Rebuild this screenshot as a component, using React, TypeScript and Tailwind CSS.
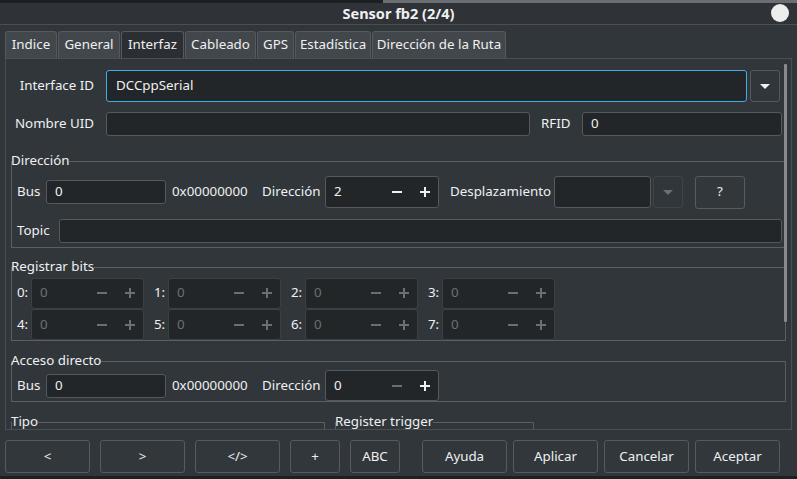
import React from 'react';

const Minus = ({ c }: { c: string }) => (
  <svg width="10" height="10" viewBox="0 0 10 10" className="shrink-0">
    <rect x="0" y="4" width="10" height="2" fill={c} />
  </svg>
);
const Plus = ({ c }: { c: string }) => (
  <svg width="10" height="10" viewBox="0 0 10 10" className="shrink-0">
    <rect x="0" y="4" width="10" height="2" fill={c} />
    <rect x="4" y="0" width="2" height="10" fill={c} />
  </svg>
);
const Tri = ({ c }: { c: string }) => (
  <svg width="10" height="5" viewBox="0 0 10 5">
    <polygon points="0,0 10,0 5,5" fill={c} />
  </svg>
);

function Field({ className, value }: { className: string; value?: string }) {
  return (
    <div className={`border border-[#55595e] rounded-[3px] bg-[#232629] flex items-center pl-[8px] ${className}`}>
      {value}
    </div>
  );
}

function Spin({
  className,
  value,
  disabled,
  minusOff,
}: {
  className: string;
  value: string;
  disabled?: boolean;
  minusOff?: boolean;
}) {
  const on = '#eff0f1';
  const off = '#6b6f73';
  return (
    <div
      className={`rounded-[3px] bg-[#232629] flex items-center pl-[8px] pr-[8px] border ${
        disabled ? 'border-[#3b4045] text-[#6b6f73]' : 'border-[#55595e]'
      } ${className}`}
    >
      <span className="flex-1">{value}</span>
      <Minus c={disabled || minusOff ? off : on} />
      <span className="w-[18px]" />
      <Plus c={disabled ? off : on} />
    </div>
  );
}

function GroupHeader({ title }: { title: string }) {
  return (
    <div className="flex items-center h-[14px] relative z-10">
      <span className="leading-none">{title}</span>
      <div className="flex-1 h-px bg-[#5a5f64]" />
    </div>
  );
}

function Btn({ className, label }: { className: string; label: string }) {
  return (
    <div className={`h-[33px] border border-[#575b60] rounded-[3px] bg-[#32373c] flex items-center justify-center ${className}`}>
      {label}
    </div>
  );
}

const tabs: [string, string, boolean][] = [
  ['Indice', 'w-[52px]', false],
  ['General', 'w-[62px]', false],
  ['Interfaz', 'w-[63px]', true],
  ['Cableado', 'w-[71px]', false],
  ['GPS', 'w-[37px]', false],
  ['Estadística', 'w-[76px]', false],
  ['Dirección de la Ruta', 'w-[134px]', false],
];

export default function App() {
  return (
    <div className="w-[797px] h-[479px] bg-[#31363b] text-[#eff0f1] text-[13.33px] overflow-hidden flex flex-col font-['Noto_Sans',sans-serif]">
      {/* top strip */}
      <div className="h-[3px] flex shrink-0">
        <div className="w-[383px] bg-[#1d2023]" />
        <div className="flex-1 bg-[#6b6f73]" />
      </div>
      {/* title bar */}
      <div className="h-[21px] shrink-0 relative flex items-center justify-center bg-[#2f3338]">
        <span className="font-bold text-[14.5px] leading-none">Sensor fb2 (2/4)</span>
        <div className="absolute right-[8px] top-[1px] w-[18px] h-[18px] rounded-full bg-[#eceded]" />
      </div>
      <div className="h-px shrink-0 bg-[#4a4f54]" />

      {/* tabs */}
      <div className="flex pl-[5px] pt-[6px] gap-px shrink-0">
        {tabs.map(([t, w, sel]) => (
          <div
            key={t}
            className={`${w} h-[27px] rounded-t-[3px] border border-b-0 border-[#555a5f] flex items-center justify-center whitespace-nowrap ${
              sel ? 'bg-[#2b2f33]' : 'bg-[#42474c]'
            }`}
          >
            {t}
          </div>
        ))}
      </div>

      {/* panel */}
      <div className="ml-[5px] w-[787px] h-[372px] shrink-0 border border-[#4a4f54] relative overflow-hidden">
        <div className="absolute right-[4px] top-[5px] w-[3px] h-[258px] bg-[#868a8e] rounded-[1px] z-20" />

        {/* Interface ID */}
        <div className="flex h-[32px] mt-[11px] items-center">
          <span className="w-[88px] text-right whitespace-nowrap">Interface ID</span>
          <div className="ml-[12px] w-[641px] h-[32px] border border-[#3daee9] rounded-[3px] bg-[#232629] flex items-center pl-[9px]">
            DCCppSerial
          </div>
          <div className="ml-[3px] w-[30px] h-[32px] border border-[#55595e] rounded-[3px] flex items-center justify-center">
            <Tri c="#eff0f1" />
          </div>
        </div>

        {/* Nombre UID */}
        <div className="flex h-[24px] mt-[10px] items-center">
          <span className="w-[88px] text-right whitespace-nowrap">Nombre UID</span>
          <Field className="ml-[12px] w-[424px] h-[24px]" />
          <span className="ml-[11px] w-[41px]">RFID</span>
          <Field className="w-[200px] h-[24px]" value="0" />
        </div>

        {/* Dirección */}
        <div className="ml-[5px] w-[775px] mt-[18px]">
          <GroupHeader title="Dirección" />
          <div className="border-x border-b border-[#5a5f64] -mt-[7px] pt-[15px] pl-[5px] pr-[3px] pb-[4px]">
            <div className="flex h-[32px] items-center whitespace-nowrap">
              <span className="w-[29px]">Bus</span>
              <Field className="w-[120px] h-[24px]" value="0" />
              <span className="ml-[6px] w-[90px]">0x00000000</span>
              <span className="w-[63px]">Dirección</span>
              <Spin className="w-[114px] h-[32px]" value="2" />
              <span className="ml-[11px] w-[104px]">Desplazamiento</span>
              <Field className="w-[97px] h-[32px]" />
              <div className="ml-[2px] w-[30px] h-[32px] border border-[#3f4449] rounded-[3px] flex items-center justify-center">
                <Tri c="#6b6f73" />
              </div>
              <Btn className="ml-[12px] w-[50px]" label="?" />
            </div>
            <div className="flex h-[24px] mt-[11px] items-center">
              <span className="w-[42px]">Topic</span>
              <Field className="flex-1 h-[24px]" />
            </div>
          </div>
        </div>

        {/* Registrar bits */}
        <div className="ml-[5px] w-[775px] mt-[12px]">
          <GroupHeader title="Registrar bits" />
          <div className="border-x border-b border-[#5a5f64] -mt-[7px] pt-[10px] pl-[5px]">
            {[
              ['0:', '1:', '2:', '3:'],
              ['4:', '5:', '6:', '7:'],
            ].map((row, ri) => (
              <div key={ri} className={`flex gap-x-[10px] ${ri === 0 ? 'h-[32px]' : 'h-[31px]'}`}>
                {row.map((l) => (
                  <div key={l} className="flex items-center">
                    <span className="w-[14px]">{l}</span>
                    <Spin className="w-[113px] h-[31px]" value="0" disabled />
                  </div>
                ))}
              </div>
            ))}
          </div>
        </div>

        {/* Acceso directo */}
        <div className="ml-[5px] w-[775px] mt-[13px]">
          <GroupHeader title="Acceso directo" />
          <div className="border-x border-b border-[#5a5f64] -mt-[7px] pt-[9px] pl-[5px]">
            <div className="flex h-[31px] items-center whitespace-nowrap">
              <span className="w-[29px]">Bus</span>
              <Field className="w-[120px] h-[24px]" value="0" />
              <span className="ml-[6px] w-[90px]">0x00000000</span>
              <span className="w-[63px]">Dirección</span>
              <Spin className="w-[114px] h-[31px]" value="0" minusOff />
            </div>
          </div>
        </div>

        {/* Tipo / Register trigger */}
        <div className="flex ml-[5px] mt-[13px]">
          <div className="w-[314px]">
            <GroupHeader title="Tipo" />
            <div className="border-x border-[#5a5f64] -mt-[7px] h-[40px]" />
          </div>
          <div className="w-[199px] ml-[10px]">
            <GroupHeader title="Register trigger" />
            <div className="border-x border-[#5a5f64] -mt-[7px] h-[40px]" />
          </div>
        </div>
      </div>

      {/* buttons */}
      <div className="flex pl-[5px] mt-[10px] shrink-0">
        <Btn className="w-[85px]" label="<" />
        <Btn className="ml-[10px] w-[85px]" label=">" />
        <Btn className="ml-[10px] w-[85px]" label="</>" />
        <Btn className="ml-[10px] w-[50px]" label="+" />
        <Btn className="ml-[10px] w-[50px]" label="ABC" />
        <Btn className="ml-[22px] w-[85px]" label="Ayuda" />
        <Btn className="ml-[6px] w-[85px]" label="Aplicar" />
        <Btn className="ml-[6px] w-[85px]" label="Cancelar" />
        <Btn className="ml-[6px] w-[85px]" label="Aceptar" />
      </div>
      <div className="flex-1" />
      <div className="h-[3px] shrink-0 bg-[#1d2023]" />
    </div>
  );
}
